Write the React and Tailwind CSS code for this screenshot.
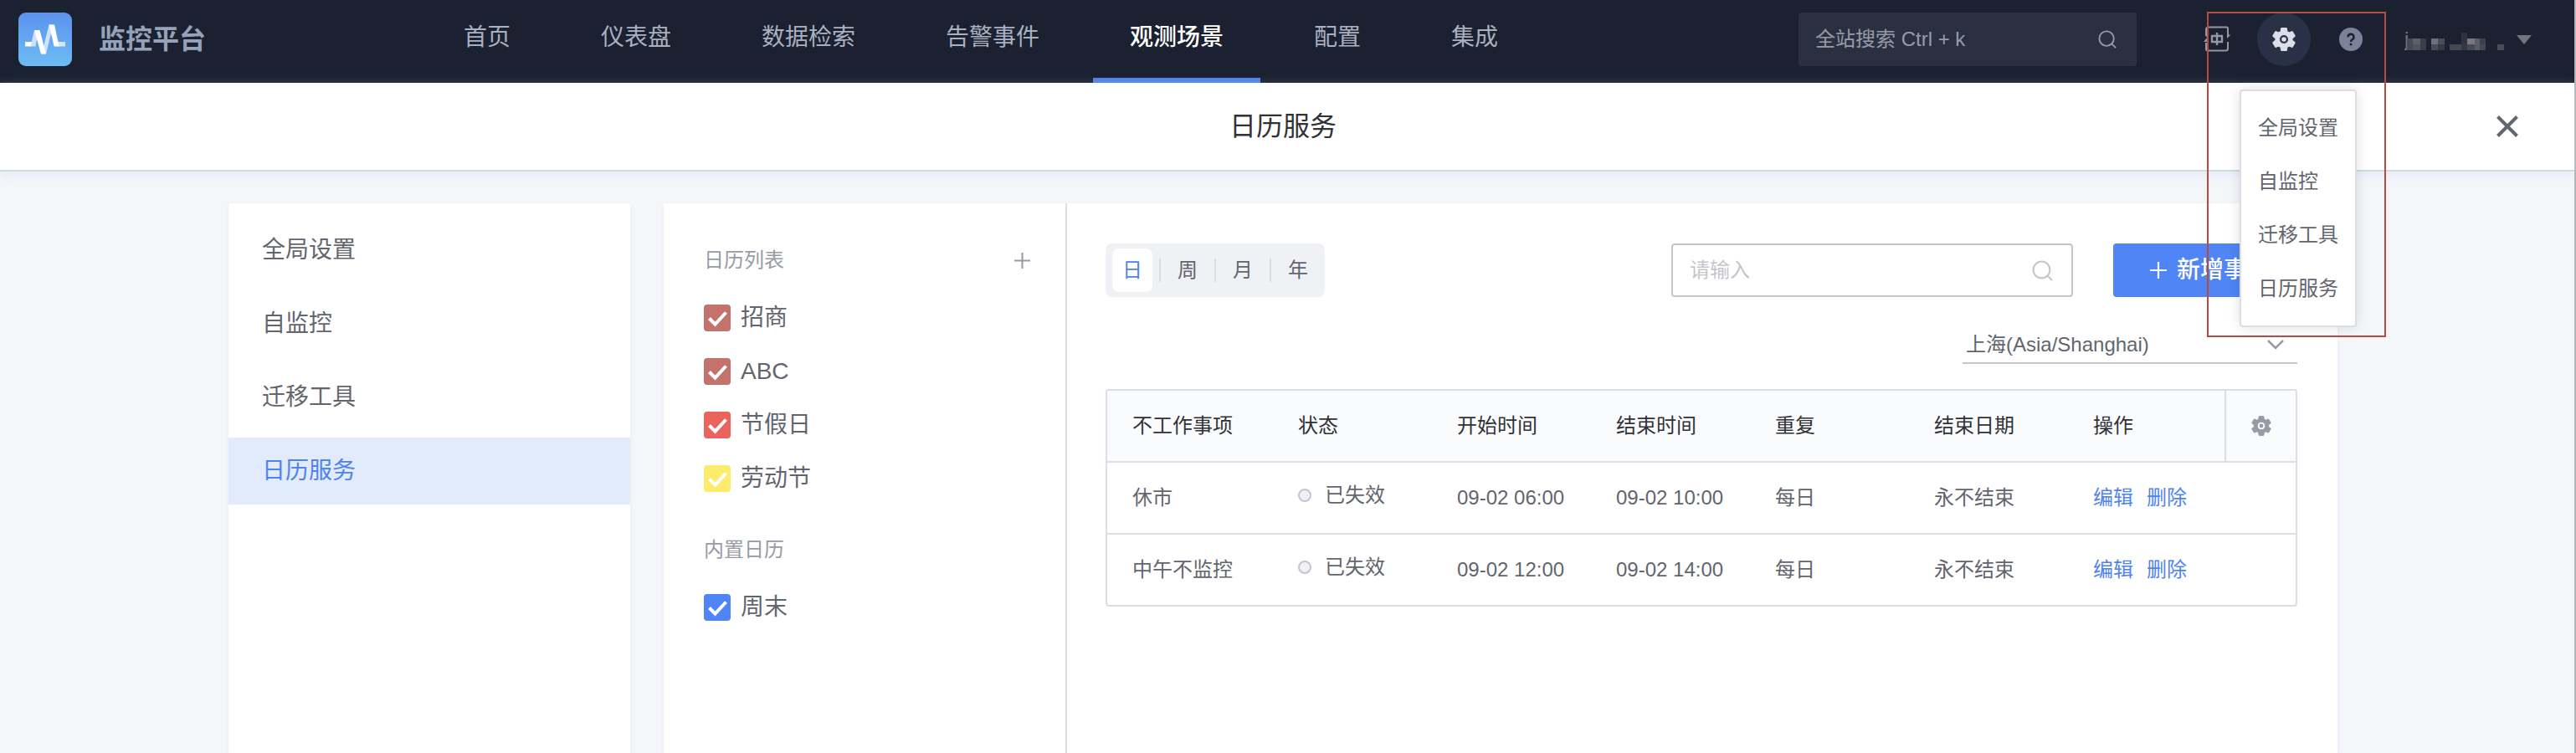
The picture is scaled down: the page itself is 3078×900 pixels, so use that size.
import { useState } from "react";

const navItems = ["首页", "仪表盘", "数据检索", "告警事件", "观测场景", "配置", "集成"];
const settings = ["全局设置", "自监控", "迁移工具", "日历服务"];
const columns = ["不工作事项", "状态", "开始时间", "结束时间", "重复", "结束日期", "操作"];
const rows = [
  { name: "休市", status: "已失效", start: "09-02 06:00", end: "09-02 10:00", repeat: "每日", until: "永不结束" },
  { name: "中午不监控", status: "已失效", start: "09-02 12:00", end: "09-02 14:00", repeat: "每日", until: "永不结束" },
];

// x, y, width, height, colour of each block of the masked account name
const nameBlocks = [
  [3, 11, 7, 14, "#474954"],
  [10, 11, 9, 7, "#5d5f69"],
  [10, 18, 9, 7, "#50525c"],
  [19, 11, 7, 14, "#3b3e49"],
  [32, 11, 8, 7, "#6f7079"],
  [32, 18, 8, 7, "#484a55"],
  [40, 11, 8, 7, "#4a4c57"],
  [40, 18, 8, 7, "#363944"],
  [54, 18, 14, 7, "#454852"],
  [68, 4, 7, 14, "#30333f"],
  [68, 18, 7, 7, "#343743"],
  [75, 11, 9, 7, "#777881"],
  [75, 18, 9, 7, "#474954"],
  [84, 11, 6, 7, "#5b5d67"],
  [84, 18, 6, 7, "#595b65"],
  [90, 11, 7, 7, "#3e414c"],
  [90, 18, 7, 7, "#464953"],
  [111, 18, 8, 7, "#4a4d57"],
];

function LogoIcon() {
  return (
    <svg className="size-16" viewBox="0 0 64 64" aria-hidden="true">
      <defs>
        <linearGradient id="logo-bg" x1="0" y1="0" x2="0" y2="1">
          <stop offset="0" stopColor="#5b92ee" />
          <stop offset="1" stopColor="#6dbcf5" />
        </linearGradient>
      </defs>
      <rect width="64" height="64" rx="9" fill="url(#logo-bg)" />
      <path d="M8 35h8v5.500H8z" fill="#fff" />
      <path d="M43 35h13v5.500H47z" fill="#d3e6fc" />
      <path d="M14.500 40.500 19 21h5l-3.500 19.500z" fill="#cfe2fb" />
      <path d="M28 49.500 36.500 14.500h5l-8.500 35z" fill="#cfe2fb" />
      <path d="M19 21h6.500l7.500 28.500h-6z" fill="#fff" />
      <path d="M36.500 14.500h6.500l5.700 26h-6z" fill="#fff" />
    </svg>
  );
}

function SearchIcon({ className }) {
  return (
    <svg className={className} viewBox="0 0 24 24" fill="none" stroke="currentColor" strokeWidth="2" aria-hidden="true">
      <circle cx="11" cy="11" r="9.500" />
      <path d="m17.500 17.500 5.500 5.500" />
    </svg>
  );
}

function PlusIcon({ className }) {
  return (
    <svg className={className} viewBox="0 0 20 20" stroke="currentColor" strokeWidth="2.200" aria-hidden="true">
      <path d="M10 0v20M0 10h20" />
    </svg>
  );
}

function GearIcon({ className }) {
  return (
    <svg className={className} viewBox="2 2 20 20" fill="currentColor" aria-hidden="true">
      <path
        fillRule="evenodd"
        stroke="currentColor"
        strokeWidth="0.800"
        strokeLinejoin="round"
        d="M19.14 12.94c.04-.3.06-.61.06-.94 0-.32-.02-.64-.07-.94l2.03-1.580c.18-.14.23-.41.12-.61l-1.920-3.320c-.12-.22-.37-.29-.59-.22l-2.390.96c-.5-.38-1.030-.7-1.620-.94L14.400 2.810c-.04-.24-.24-.41-.48-.41h-3.840c-.24 0-.43.17-.47.41L9.250 5.350C8.660 5.590 8.120 5.920 7.630 6.290L5.240 5.330c-.22-.08-.47 0-.59.22L2.740 8.870c-.12.21-.08.47.12.61l2.030 1.580c-.05.3-.09.63-.09.94s.02.64.07.94l-2.030 1.580c-.18.14-.23.41-.12.61l1.920 3.320c.12.22.37.29.59.22l2.390-.96c.5.38 1.030.7 1.620.94l.36 2.540c.05.24.24.41.48.41h3.840c.24 0 .44-.17.47-.41l.36-2.540c.59-.24 1.130-.56 1.620-.94l2.390.96c.22.08.47 0 .59-.22l1.920-3.320c.12-.22.07-.47-.12-.61zM12 8a4 4 0 1 0 0 8 4 4 0 0 0 0-8z"
      />
      <circle cx="12" cy="12" r="2" />
    </svg>
  );
}

function LanguageIcon() {
  return (
    <svg className="size-8" viewBox="0 0 32 32" fill="none" stroke="#9498a3" strokeWidth="2" aria-hidden="true">
      <path d="M3 11V4a2.500 2.500 0 0 1 2.500-2.500h22A1.500 1.500 0 0 1 29 3v8M3 20v8a1.500 1.500 0 0 0 1.500 1.500h22A2.500 2.500 0 0 0 29 27v-8" />
      <path d="M2 9h2.500v5L2 11.500zM28 9.500v5.500l4.500-4.500H29zM4 14v5H0z" fill="#9498a3" stroke="none" />
      <path d="M10 12h12v7H10zM16 8v15" strokeWidth="2.400" />
    </svg>
  );
}

function CheckItem({ label, color }) {
  const [checked, setChecked] = useState(true);
  return (
    <label className="flex h-8 items-center gap-3 text-[28px] text-[#63656e]">
      <span className="grid size-8 shrink-0">
        <input
          type="checkbox"
          checked={checked}
          onChange={() => setChecked(!checked)}
          className={`col-start-1 row-start-1 size-8 appearance-none rounded ${color}`}
        />
        {checked && (
          <svg className="pointer-events-none col-start-1 row-start-1 size-8" viewBox="0 0 32 32" fill="none" stroke="#fff" strokeWidth="4" aria-hidden="true">
            <path d="m6.500 16.500 7 7L26.500 9.500" />
          </svg>
        )}
      </span>
      {label}
    </label>
  );
}

export default function App() {
  const [view, setView] = useState("日");
  return (
    <div className="flex min-h-screen flex-col border-r-2 border-[#b4b5b8] bg-[#f5f6fa] font-['Liberation_Sans','Noto_Sans_CJK_SC',sans-serif] text-2xl text-[#63656e]">
      <header className="flex h-[99px] items-start bg-[#1b2130] pr-[51px] pl-[22px]">
        <a href="#home" className="flex shrink-0 items-center gap-8 pt-[15px] text-[32px] leading-[64px] font-bold text-[#96a2b9]">
          <LogoIcon />
          监控平台
        </a>
        <nav className="ml-[264px] flex shrink-0 gap-5">
          {navItems.map((item) => (
            <a
              key={item}
              href="#nav"
              className={`flex h-[99px] items-center border-b-6 px-11 pb-1 text-[28px] ${
                item === "观测场景" ? "border-[#4f82ea] font-medium text-white" : "border-transparent text-[#a9b0c0]"
              }`}
            >
              {item}
            </a>
          ))}
        </nav>
        <div className="ml-auto box-content flex h-16 shrink-0 items-center pt-[15px]">
          <div className="flex h-16 w-[404px] items-center rounded-sm bg-[#2a3042] pr-6 pl-5 text-[#979ba5]">
            <input
              type="text"
              aria-label="全站搜索"
              placeholder="全站搜索 Ctrl + k"
              className="min-w-0 flex-1 bg-transparent outline-none placeholder:text-[#979ba5]"
            />
            <SearchIcon className="size-[22px]" />
          </div>
          <button type="button" aria-label="切换语言" className="ml-20">
            <LanguageIcon />
          </button>
          <div className="relative ml-8">
            <button type="button" aria-label="设置" className="flex size-16 items-center justify-center rounded-full bg-[#283146] text-[#dcdfe9]">
              <GearIcon className="size-7" />
            </button>
            <ul className="absolute top-23 -right-[55px] z-10 w-[140px] rounded border-2 border-[#dcdee5] bg-white py-3 pl-5 shadow-[0_0_16px_rgba(0,0,0,0.12)]">
              {settings.map((item) => (
                <li key={item}>
                  <a href="#settings" className="block leading-[64px] whitespace-nowrap">
                    {item}
                  </a>
                </li>
              ))}
            </ul>
            <div className="pointer-events-none absolute -top-px -left-15 z-20 h-[389px] w-[214px] border-2 border-[#b84a40]" />
          </div>
          <button type="button" aria-label="帮助" className="ml-[34px]">
            <svg className="size-7" viewBox="0 0 28 28" aria-hidden="true">
              <circle cx="14" cy="14" r="14" fill="#7a829a" />
              <path d="M10.500 11.200a3.500 3.500 0 1 1 5.200 3.100c-1.200.7-1.700 1.200-1.700 2.700" fill="none" stroke="#1b2130" strokeWidth="2.400" />
              <circle cx="14" cy="20" r="1.500" fill="#1b2130" />
            </svg>
          </button>
          <button type="button" aria-label="账号" className="ml-[50px] flex items-center gap-[14px]">
            <svg className="h-8 w-[120px]" viewBox="0 0 120 32" aria-hidden="true">
              <text x="0" y="24" fontSize="24" fill="#747680">
                j
              </text>
              {nameBlocks.map(([x, y, w, h, fill]) => (
                <rect key={`${x}-${y}`} x={x} y={y + 4} width={w} height={h} fill={fill} />
              ))}
            </svg>
            <svg className="h-[11px] w-[18px]" viewBox="0 0 18 11" aria-hidden="true">
              <path d="M0 0h18l-9 11z" fill="#73757c" />
            </svg>
          </button>
        </div>
      </header>

      <div className="relative flex h-[106px] items-center border-b-2 border-[#d3d7e0] bg-white pr-[10px] shadow-[0_4px_12px_rgba(200,215,240,0.4)]">
        <h1 className="flex-1 text-center text-[32px] text-[#313238]">日历服务</h1>
        <button type="button" aria-label="关闭" className="absolute right-[67px] text-[#63656e]">
          <svg className="size-[26px]" viewBox="0 0 26 26" stroke="currentColor" strokeWidth="4" aria-hidden="true">
            <path d="m1.500 1.500 23 23M24.500 1.500l-23 23" />
          </svg>
        </button>
      </div>

      <div className="flex flex-1 justify-center pt-[38px] pr-[10px]">
        <div className="flex w-full max-w-[2520px] gap-10">
          <aside className="w-[480px] shrink-0 rounded-t bg-white pt-4 shadow-[0_2px_6px_rgba(0,0,0,0.05)]">
            <ul className="flex flex-col gap-2 text-[28px]">
              {settings.map((item) => (
                <li key={item}>
                  <a
                    href="#settings"
                    className={`block pl-10 leading-[80px] ${item === "日历服务" ? "bg-[#e1ebfc] text-[#4f83f0]" : ""}`}
                  >
                    {item}
                  </a>
                </li>
              ))}
            </ul>
          </aside>

          <main className="flex min-w-0 flex-1 bg-white shadow-[0_2px_6px_rgba(0,0,0,0.05)]">
            <section className="w-[482px] shrink-0 border-r-2 border-[#dcdee5] pt-[50px] pr-[42px] pl-12">
              <div className="flex h-9 items-center justify-between text-[#979ba5]">
                <h2>日历列表</h2>
                <button type="button" aria-label="新增日历">
                  <PlusIcon className="size-[19px]" />
                </button>
              </div>
              <div className="mt-[35px] flex flex-col gap-8">
                <CheckItem label="招商" color="bg-[#c4726c]" />
                <CheckItem label="ABC" color="bg-[#c4726c]" />
                <CheckItem label="节假日" color="bg-[#ea635c]" />
                <CheckItem label="劳动节" color="bg-[#fbec6b]" />
              </div>
              <h2 className="mt-[51px] leading-9 text-[#979ba5]">内置日历</h2>
              <div className="mt-[35px]">
                <CheckItem label="周末" color="bg-[#4f85f5]" />
              </div>
            </section>

            <section className="min-w-0 flex-1 pt-12 pr-12 pl-[46px]">
              <div className="flex items-center">
                <div className="flex h-16 items-center rounded-lg bg-[#f0f1f5] px-2">
                  {["日", "周", "月", "年"].map((item, i) => (
                    <div key={item} className="flex items-center">
                      {i > 0 && <span className="mx-2 h-7 w-0.5 bg-[#dcdee5]" />}
                      <button
                        type="button"
                        onClick={() => setView(item)}
                        className={`h-[52px] w-12 rounded-lg ${view === item ? "bg-white text-[#4f83f0]" : ""}`}
                      >
                        {item}
                      </button>
                    </div>
                  ))}
                </div>
                <div className="ml-auto flex h-16 w-[480px] items-center rounded-sm border-2 border-[#c4c6cc] pr-[22px] pl-5 text-[#c4c6cc]">
                  <input
                    type="text"
                    aria-label="搜索事项"
                    placeholder="请输入"
                    className="min-w-0 flex-1 outline-none placeholder:text-[#c4c6cc]"
                  />
                  <SearchIcon className="size-[25px]" />
                </div>
                <button type="button" className="ml-12 flex h-16 w-[220px] items-center gap-3 rounded-sm bg-[#4f85f5] pl-11 text-[28px] font-medium whitespace-nowrap text-white">
                  <PlusIcon className="size-5 shrink-0" />
                  新增事项
                </button>
              </div>

              <div className="mt-9 ml-auto grid w-[400px] border-b-2 border-[#c4c6cc]">
                <select aria-label="时区" className="col-start-1 row-start-1 h-[42px] appearance-none bg-transparent pl-1 outline-none">
                  <option>上海(Asia/Shanghai)</option>
                </select>
                <svg className="pointer-events-none col-start-1 row-start-1 mr-4 h-3 w-5 self-center justify-self-end" viewBox="0 0 20 12" fill="none" stroke="#979ba5" strokeWidth="2.500" aria-hidden="true">
                  <path d="m1 1 9 9 9-9" />
                </svg>
              </div>

              <div className="mt-[30px] overflow-hidden rounded-sm border-2 border-[#dcdee5]">
                <table className="w-full table-fixed text-left">
                  <colgroup>
                    <col className="w-[198px]" />
                    <col />
                    <col />
                    <col />
                    <col />
                    <col />
                    <col className="w-[188px]" />
                    <col className="w-[84px]" />
                  </colgroup>
                  <thead className="bg-[#fafbfd] text-[#313238]">
                    <tr className="h-[85px] border-b-2 border-[#dcdee5]">
                      {columns.map((c) => (
                        <th key={c} scope="col" className="pl-[30px] font-normal whitespace-nowrap">
                          {c}
                        </th>
                      ))}
                      <th scope="col" className="border-l-2 border-[#dcdee5]">
                        <button type="button" aria-label="表格设置" className="mx-auto block text-[#979ba5]">
                          <GearIcon className="size-6" />
                        </button>
                      </th>
                    </tr>
                  </thead>
                  <tbody>
                    {rows.map((r) => (
                      <tr key={r.name} className="h-[86px] border-b-2 border-[#dcdee5] whitespace-nowrap last:h-[85px] last:border-b-0">
                        <td className="pl-[30px]">{r.name}</td>
                        <td className="pl-[30px]">
                          <span className="flex items-center gap-4 pb-1.5">
                            <span className="size-4 rounded-full border-2 border-[#c4c6cc] bg-[#f0f1f5]" />
                            {r.status}
                          </span>
                        </td>
                        <td className="pl-[30px]">{r.start}</td>
                        <td className="pl-[30px]">{r.end}</td>
                        <td className="pl-[30px]">{r.repeat}</td>
                        <td className="pl-[30px]">{r.until}</td>
                        <td colSpan={2} className="pl-[30px]">
                          <span className="flex gap-4 text-[#4f83f0]">
                            <a href="#edit">编辑</a>
                            <a href="#delete">删除</a>
                          </span>
                        </td>
                      </tr>
                    ))}
                  </tbody>
                </table>
              </div>
            </section>
          </main>
        </div>
      </div>
    </div>
  );
}
